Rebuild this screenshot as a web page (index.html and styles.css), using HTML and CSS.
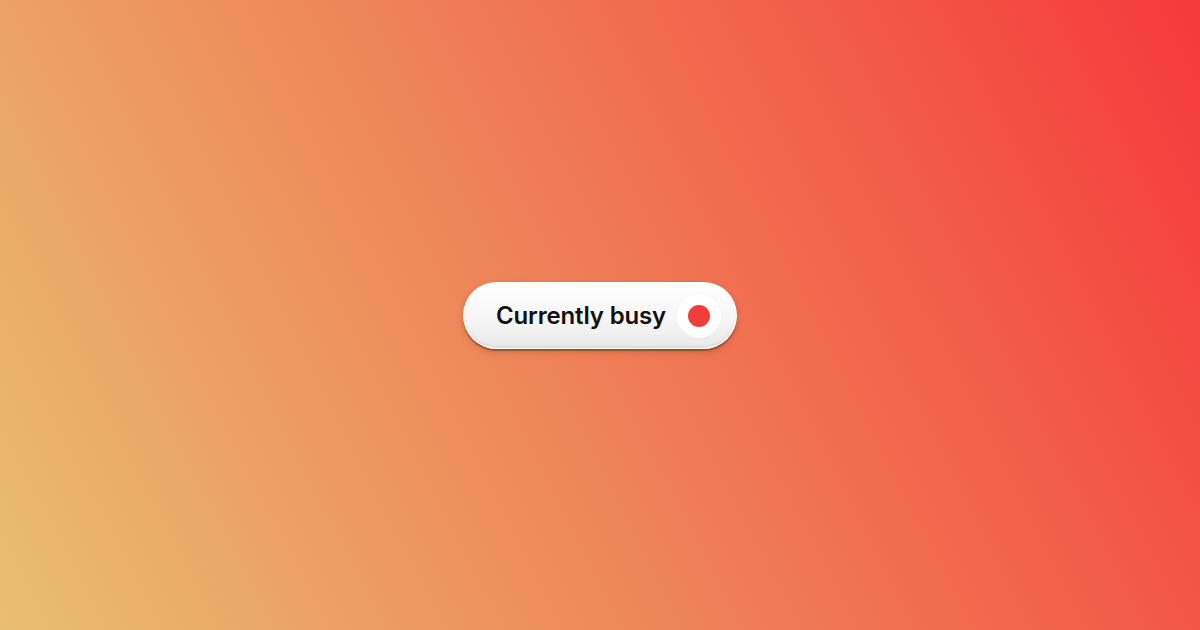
FILE: index.html
```html
<!DOCTYPE html>
<html>
<head>
<meta charset="utf-8">
<link rel="stylesheet" href="styles.css">
</head>
<body>
<main class="stage">
  <div class="pill">
    <span class="label">Currently busy</span>
    <span class="dot-wrap"><span class="dot"></span></span>
  </div>
</main>
</body>
</html>
```
FILE: styles.css
```css
html, body {
  margin: 0;
  padding: 0;
  width: 1200px;
  height: 630px;
  overflow: hidden;
}
.stage {
  width: 1200px;
  height: 630px;
  display: flex;
  align-items: center;
  justify-content: center;
  background: linear-gradient(63deg, #e8bf70 0%, #ec9d61 25%, #ef7d57 50%, #f25c48 75%, #f53a3b 100%);
  font-family: Inter, "Liberation Sans", sans-serif;
}
.pill {
  display: flex;
  align-items: center;
  gap: 11px;
  box-sizing: border-box;
  height: 67px;
  padding: 0 15px 0 32px;
  margin-top: 1px;
  border-radius: 34px;
  background: linear-gradient(to bottom, #ffffff 0%, #f6f6f6 55%, #e9e9e9 100%);
  border: 1px solid rgba(255,255,255,0.9);
  box-shadow: 0 2px 1px rgba(110, 50, 20, 0.55), 0 3px 6px rgba(110, 40, 20, 0.25), inset 0 -2px 3px rgba(0,0,0,0.06);
}
.label {
  font-size: 24px;
  font-weight: 600;
  color: #111;
  letter-spacing: -0.15px;
}
.dot-wrap {
  width: 44px;
  height: 44px;
  border-radius: 50%;
  background: #fff;
  display: flex;
  align-items: center;
  justify-content: center;
  box-shadow: 0 0 3px rgba(0,0,0,0.04);
}
.dot {
  width: 22px;
  height: 22px;
  border-radius: 50%;
  background: #f33d3d;
}
```
